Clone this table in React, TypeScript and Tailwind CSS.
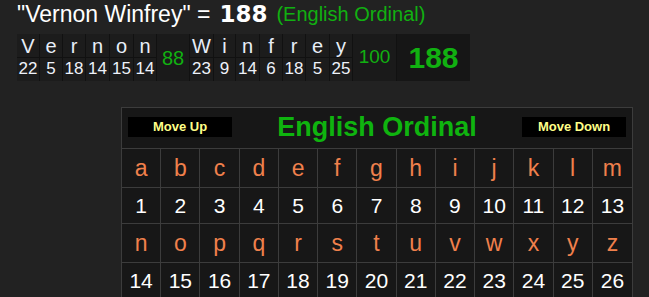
const word1 = [
  ["V", 22],
  ["e", 5],
  ["r", 18],
  ["n", 14],
  ["o", 15],
  ["n", 14],
] as const;

const word2 = [
  ["W", 23],
  ["i", 9],
  ["n", 14],
  ["f", 6],
  ["r", 18],
  ["e", 5],
  ["y", 25],
] as const;

const w1 = [23, 23, 23, 24, 24, 23];
const w2 = [24, 22, 24, 23, 23, 24, 23];

const letters = "abcdefghijklmnopqrstuvwxyz".split("");

function LetterCell({ ch, n, w }: { ch: string; n: number; w: number }) {
  return (
    <div className="flex flex-col bg-[#1c1c1c]" style={{ width: w }}>
      <div className="flex h-[23px] items-center justify-center text-[20px] text-[#e8eef8]">
        {ch}
      </div>
      <div className="flex h-[23px] items-center justify-center border-t border-[#111] text-[17px] text-[#eef2fa]">
        {n}
      </div>
    </div>
  );
}

export default function App() {
  const rows = [letters.slice(0, 13), letters.slice(13)];
  return (
    <div
      className="h-[297px] w-[649px] overflow-hidden bg-[#222222]"
      style={{ fontFamily: '"Liberation Sans", Arial, sans-serif' }}
    >
      <div className="flex h-[28px] items-center pl-[17px] text-white">
        <span className="text-[23px] leading-none">"Vernon Winfrey" = </span>
        <span className="ml-[9px] font-['DejaVu_Sans',sans-serif] text-[23px] font-bold leading-none">
          188
        </span>
        <span className="ml-[9px] text-[20px] leading-none text-[#11b011]">
          (English Ordinal)
        </span>
      </div>

      <div className="ml-[17px] mt-[6px] flex h-[47px] w-[453px] gap-px bg-[#111]">
        {word1.map(([c, n], i) => (
          <LetterCell key={"a" + i} ch={c} n={n} w={w1[i] - 1} />
        ))}
        <div className="flex w-[32px] items-center justify-center bg-[#1a1a1a] text-[20px] text-[#11b011]">
          88
        </div>
        {word2.map(([c, n], i) => (
          <LetterCell key={"b" + i} ch={c} n={n} w={w2[i] - 1} />
        ))}
        <div className="flex w-[43px] items-center justify-center bg-[#1a1a1a] text-[19px] text-[#11b011]">
          100
        </div>
        <div className="flex flex-1 items-center justify-center bg-[#161616] text-[30px] font-bold text-[#11b011]">
          188
        </div>
      </div>

      <div className="ml-[121px] mt-[26px] w-[512px] border border-[#3c3c3c] bg-[#171717]">
        <div className="flex h-[41px] items-center justify-between border-b border-[#3c3c3c] px-[6px] pb-[2px]">
          <div className="flex h-[20px] w-[104px] items-center justify-center bg-black text-[13px] font-bold text-[#ffff88]">
            Move Up
          </div>
          <div className="text-[27px] font-bold text-[#0fb40f]">English Ordinal</div>
          <div className="flex h-[20px] w-[104px] items-center justify-center bg-black text-[13px] font-bold text-[#ffff88]">
            Move Down
          </div>
        </div>
        {rows.map((row, r) => (
          <div key={r}>
            <div className="grid h-[39px] grid-cols-13 border-b border-[#3c3c3c]">
              {row.map((l, i) => (
                <div
                  key={l}
                  className={
                    "flex items-center justify-center text-[23px] text-[#f0804c] " +
                    (i < 12 ? "border-r border-[#3c3c3c]" : "")
                  }
                >
                  {l}
                </div>
              ))}
            </div>
            <div className="grid h-[36px] grid-cols-13 border-b border-[#3c3c3c]">
              {row.map((l, i) => (
                <div
                  key={l}
                  className={
                    "flex items-center justify-center text-[21px] text-white " +
                    (i < 12 ? "border-r border-[#3c3c3c]" : "")
                  }
                >
                  {r * 13 + i + 1}
                </div>
              ))}
            </div>
          </div>
        ))}
      </div>
    </div>
  );
}
